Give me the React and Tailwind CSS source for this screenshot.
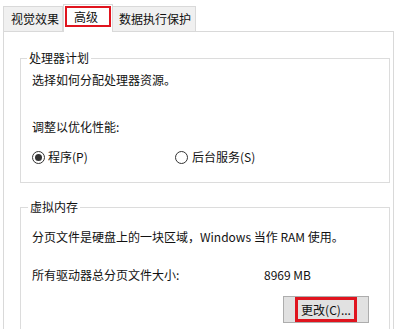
export default function App() {
    const font = { fontFamily: '"Noto Sans CJK SC", "Noto Sans", sans-serif' };

    return (
        <div className="w-[394px] h-[329px] overflow-hidden bg-white text-[12px] leading-[16px] text-[#111]" style={font}>
            {/* tabs */}
            <div className="flex items-end h-[31px] pl-[3px]">
                <div className="h-[25px] w-[60px] border border-b-0 border-[#d9d9d9] bg-[#f0f0f0] pl-[7px] pt-[4px]">视觉效果</div>
                <div className="h-[28px] w-[50px] -mb-px border border-b-0 border-[#d9d9d9] bg-white pt-px pl-px relative z-10">
                    <div className="h-[21px] w-[46px] border-2 border-[#e0141e] pl-[7px] pt-[1px]">高级</div>
                </div>
                <div className="h-[25px] w-[83px] border border-b-0 border-l-0 border-[#d9d9d9] bg-[#f0f0f0] pl-[6px] pt-[4px]">数据执行保护</div>
            </div>

            {/* tab page */}
            <div className="w-[391px] h-[300px] ml-[3px] border border-[#d9d9d9] bg-white pl-[16px]">
                <fieldset className="mt-[18px] w-[370px] border border-[#dcdcdc] px-[11px] pb-[17px]">
                    <legend className="-ml-[5px] px-[2px]">处理器计划</legend>
                    <p className="pt-[6px]">选择如何分配处理器资源。</p>
                    <p className="mt-[31px]">调整以优化性能:</p>
                    <div className="flex mt-[14px]">
                        <label className="flex items-center w-[143px]">
                            <span className="w-[13px] h-[13px] rounded-full border border-[#333] flex items-center justify-center mr-[3px]">
                                <span className="w-[7px] h-[7px] rounded-full bg-[#333]" />
                            </span>
                            程序(P)
                        </label>
                        <label className="flex items-center">
                            <span className="w-[13px] h-[13px] rounded-full border border-[#333] mr-[4px]" />
                            后台服务(S)
                        </label>
                    </div>
                </fieldset>

                <fieldset className="mt-[16px] w-[370px] h-[140px] border border-[#dcdcdc] px-[11px]">
                    <legend className="-ml-[4px] px-[2px]">虚拟内存</legend>
                    <p className="pt-[14px]">分页文件是硬盘上的一块区域，Windows 当作 RAM 使用。</p>
                    <div className="flex mt-[22px]">
                        <span className="w-[232px]">所有驱动器总分页文件大小:</span>
                        <span>8969 MB</span>
                    </div>
                    <div className="flex justify-end mt-[13px] pr-[9px]">
                        <button className="w-[86px] h-[27px] border border-[#adadad] bg-[#e1e1e1] flex items-center justify-center">
                            <span className="border-[3px] border-[#e0141e] px-[3px] h-[25px] leading-[19px]">更改(C)...</span>
                        </button>
                    </div>
                </fieldset>
            </div>
        </div>
    );
}
